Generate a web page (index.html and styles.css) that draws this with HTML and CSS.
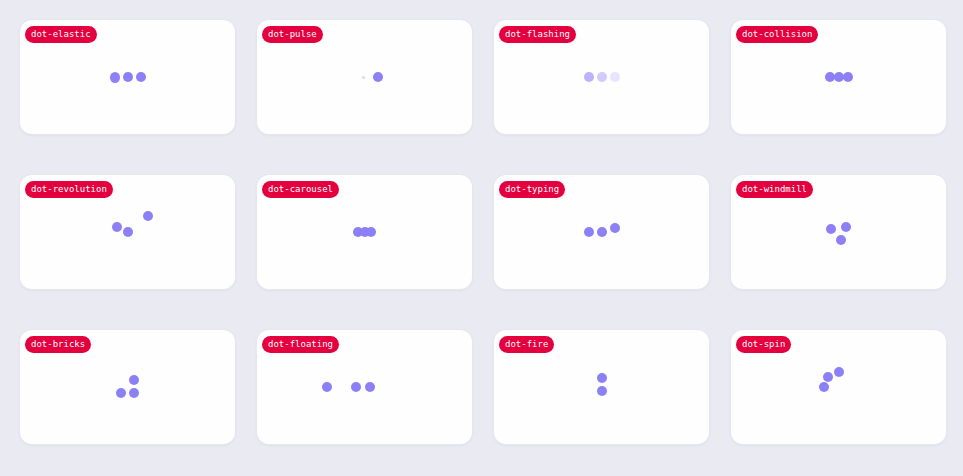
FILE: index.html
```html
<!DOCTYPE html>
<html lang="en">
<head>
<meta charset="utf-8">
<title>three dots</title>
<link rel="stylesheet" href="styles.css">
</head>
<body>
<main class="grid">
  <section class="card elastic"><span class="badge">dot-elastic</span><div class="stage"><i class="dot"></i><i class="dot"></i><i class="dot"></i></div></section>
  <section class="card pulse"><span class="badge">dot-pulse</span><div class="stage"><i class="dot"></i><i class="dot"></i></div></section>
  <section class="card flashing"><span class="badge">dot-flashing</span><div class="stage"><i class="dot"></i><i class="dot"></i><i class="dot"></i></div></section>
  <section class="card collision"><span class="badge">dot-collision</span><div class="stage"><i class="dot"></i><i class="dot"></i><i class="dot"></i></div></section>

  <section class="card revolution"><span class="badge">dot-revolution</span><div class="stage"><i class="dot"></i><i class="dot"></i><i class="dot"></i></div></section>
  <section class="card carousel"><span class="badge">dot-carousel</span><div class="stage"><i class="dot"></i><i class="dot"></i><i class="dot"></i></div></section>
  <section class="card typing"><span class="badge">dot-typing</span><div class="stage"><i class="dot"></i><i class="dot"></i><i class="dot"></i></div></section>
  <section class="card windmill"><span class="badge">dot-windmill</span><div class="stage"><i class="dot"></i><i class="dot"></i><i class="dot"></i></div></section>

  <section class="card bricks"><span class="badge">dot-bricks</span><div class="stage"><i class="dot"></i><i class="dot"></i><i class="dot"></i></div></section>
  <section class="card floating"><span class="badge">dot-floating</span><div class="stage"><i class="dot"></i><i class="dot"></i><i class="dot"></i></div></section>
  <section class="card fire"><span class="badge">dot-fire</span><div class="stage"><i class="dot"></i><i class="dot"></i></div></section>
  <section class="card spin"><span class="badge">dot-spin</span><div class="stage"><i class="dot"></i><i class="dot"></i><i class="dot"></i></div></section>
</main>
</body>
</html>
```

FILE: styles.css
```css
html, body {
  margin: 0;
  padding: 0;
}
body {
  background: #eaeaf2;
  font-family: "DejaVu Sans Mono", "Liberation Mono", monospace;
  width: 963px;
  height: 476px;
  overflow: hidden;
}
.grid {
  display: grid;
  grid-template-columns: repeat(4, 215px);
  grid-auto-rows: 114px;
  column-gap: 22px;
  row-gap: 41px;
  padding: 20px;
}
.card {
  display: grid;
  background: #fefeff;
  border-radius: 12px;
  box-shadow: 0 0 0 1px #e6e6f0, 0 1px 3px rgba(60, 60, 110, 0.10);
}
.badge {
  grid-area: 1 / 1;
  justify-self: start;
  align-self: start;
  margin: 6px 0 0 5px;
  height: 17px;
  line-height: 17px;
  padding: 0 6px;
  border-radius: 9px;
  background: #e4003f;
  color: #fff;
  font-size: 9px;
  white-space: nowrap;
}
.stage {
  grid-area: 1 / 1;
  place-self: center;
  position: relative;
  width: 0;
  height: 0;
}
.dot {
  position: absolute;
  width: 10px;
  height: 10px;
  border-radius: 50%;
  background: #8d7ff6;
}

/* dot-elastic */
.elastic .dot:nth-child(1) { left: -18px; top: -5.5px; width: 10px; height: 11px; }
.elastic .dot:nth-child(2) { left: -5px; top: -5px; }
.elastic .dot:nth-child(3) { left: 8px; top: -5px; }

/* dot-pulse */
.pulse .dot:nth-child(1) { left: -2.5px; top: -1.5px; width: 3px; height: 3px; background: rgba(141, 127, 246, 0.3); }
.pulse .dot:nth-child(2) { left: 8px; top: -5px; }

/* dot-flashing */
.flashing .dot:nth-child(1) { left: -18px; top: -5px; background: rgba(141, 127, 246, 0.6); }
.flashing .dot:nth-child(2) { left: -5px; top: -5px; background: rgba(141, 127, 246, 0.4); }
.flashing .dot:nth-child(3) { left: 8px; top: -5px; background: rgba(141, 127, 246, 0.2); }

/* dot-collision */
.collision .dot:nth-child(1) { left: -14px; top: -5px; }
.collision .dot:nth-child(2) { left: -5px; top: -5px; }
.collision .dot:nth-child(3) { left: 4px; top: -5px; }

/* dot-revolution */
.revolution .dot:nth-child(1) { left: -16px; top: -10.5px; }
.revolution .dot:nth-child(2) { left: -5px; top: -5.5px; }
.revolution .dot:nth-child(3) { left: 15px; top: -21px; }

/* dot-carousel */
.carousel .dot:nth-child(1) { left: -11.5px; top: -5.5px; }
.carousel .dot:nth-child(2) { left: -5px; top: -5.5px; }
.carousel .dot:nth-child(3) { left: 1.5px; top: -5.5px; }

/* dot-typing */
.typing .dot:nth-child(1) { left: -18px; top: -5.5px; }
.typing .dot:nth-child(2) { left: -5px; top: -5.5px; }
.typing .dot:nth-child(3) { left: 8px; top: -9.5px; }

/* dot-windmill */
.windmill .dot:nth-child(1) { left: -12.5px; top: -8.5px; }
.windmill .dot:nth-child(2) { left: 2.5px; top: -10.5px; }
.windmill .dot:nth-child(3) { left: -2.5px; top: 2.5px; }

/* dot-bricks */
.bricks .dot:nth-child(1) { left: 1.5px; top: -12px; }
.bricks .dot:nth-child(2) { left: -11.5px; top: 0.5px; }
.bricks .dot:nth-child(3) { left: 1.5px; top: 0.5px; }

/* dot-floating */
.floating .dot:nth-child(1) { left: -42.5px; top: -5.5px; }
.floating .dot:nth-child(2) { left: -13.5px; top: -5.5px; }
.floating .dot:nth-child(3) { left: 0.5px; top: -5.5px; }

/* dot-fire */
.fire .dot:nth-child(1) { left: -4.5px; top: -14.5px; }
.fire .dot:nth-child(2) { left: -4.5px; top: -1.5px; }

/* dot-spin */
.spin .dot:nth-child(1) { left: -4.5px; top: -20.5px; }
.spin .dot:nth-child(2) { left: -15.5px; top: -15.5px; }
.spin .dot:nth-child(3) { left: -19.5px; top: -5.5px; }
```
